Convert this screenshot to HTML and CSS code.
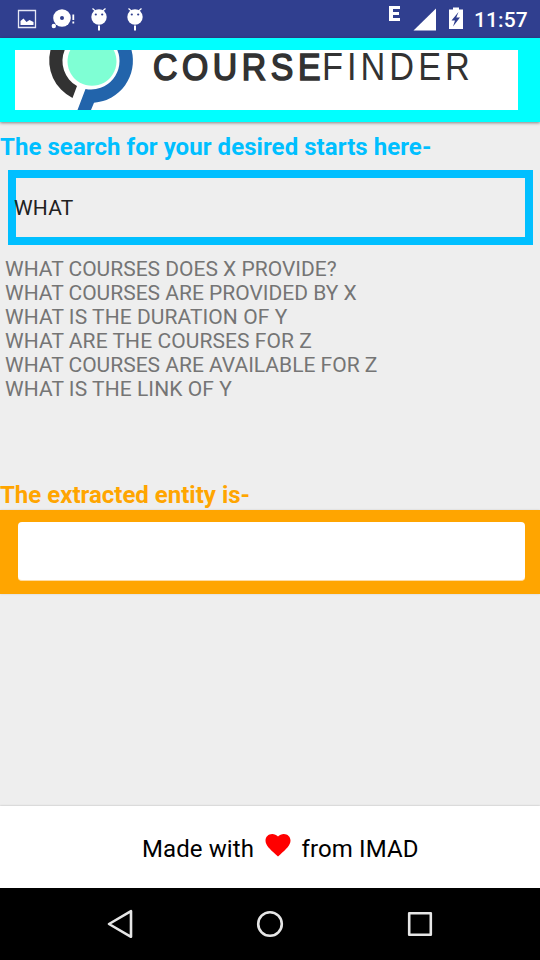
FILE: index.html
```html
<!DOCTYPE html>
<html lang="en">
<head>
<meta charset="utf-8">
<title>CourseFinder</title>
<link rel="stylesheet" href="styles.css">
</head>
<body>
<header class="status">
  <svg class="status-left" width="160" height="38" viewBox="0 0 160 38">
    <path d="M18.500 10.500h17v17h-17z" fill="none" stroke="#e6e8f5" stroke-width="1.300"/>
    <path d="M20.500 25v-4l3-2.500 3 3.500 3-2 4 2v3z" fill="#fff"/>
    <circle cx="62" cy="18" r="8.800" fill="#fff"/><circle cx="62" cy="18" r="2" fill="#303f8f"/>
    <circle cx="53.800" cy="26" r="2.200" fill="#fff"/>
    <path d="M73.300 14.500v5.500M73.300 21.500v2" stroke="#fff" stroke-width="1.800"/>
    <g id="droid">
      <circle cx="99" cy="17" r="7.700" fill="#fff"/>
      <path d="M92.500 8.500l3.500 3M105.500 8.500l-3.500 3" stroke="#fff" stroke-width="1.300"/>
      <path d="M99 25.500v5" stroke="#fff" stroke-width="2"/>
      <circle cx="95.800" cy="14.500" r="1.100" fill="#303f8f"/><circle cx="102.200" cy="14.500" r="1.100" fill="#303f8f"/>
    </g>
    <use href="#droid" x="36"/>
  </svg>
  <svg class="status-right" width="90" height="38" viewBox="380 0 90 38">
    <path d="M389 6h11v3h-7v3h6v3h-6v3h7v3h-11z" fill="#fff"/>
    <path d="M413.500 30.500h22.500v-22z" fill="#fff"/>
    <path d="M449 9.500h4v-2h6v2h4v19.500h-14z" fill="#fff"/>
    <path d="M458.500 12l-7 8.500h3.500l-2 6 7-9h-3.700z" fill="#303f8f"/>
  </svg>
  <span class="clock">11:57</span>
</header>
<div class="toolbar">
  <svg class="logo" width="503" height="60" viewBox="15 50 503 60">
    <rect x="15" y="50" width="503" height="60" fill="#fff"/>
    <path d="M70.300 50A24.500 24.500 0 1 0 113.700 50z" fill="#7fffd4"/>
    <path d="M50.500 50A42 42 0 0 0 72.500 98L77 86A28.500 28.500 0 0 1 64.700 50z" fill="#323232"/>
    <path d="M131.500 50A42 42 0 0 1 94 102.700L91 110H77.500L85.500 89A28.500 28.500 0 0 0 117.300 50z" fill="#2264ab"/>
    <g transform="translate(153 79.500) scale(.9 1)"><text class="logo-bold" textLength="186" lengthAdjust="spacing">COURSE</text></g>
    <g transform="translate(322 80) scale(.88 1)"><text class="logo-light" textLength="168" lengthAdjust="spacing">FINDER</text></g>
  </svg>
</div>
<main class="content">
  <h1 class="search-title">The search for your desired starts here-</h1>
  <div class="search-box"><span class="query">WHAT</span></div>
  <ul class="suggestions">
    <li>WHAT COURSES DOES X PROVIDE?</li>
    <li>WHAT COURSES ARE PROVIDED BY X</li>
    <li class="spaced">WHAT IS THE DURATION OF Y</li>
    <li class="spaced">WHAT ARE THE COURSES FOR Z</li>
    <li>WHAT COURSES ARE AVAILABLE FOR Z</li>
    <li class="spaced">WHAT IS THE LINK OF Y</li>
  </ul>
  <h2 class="entity-title">The extracted entity is-</h2>
  <div class="entity-bar"><div class="entity-field"></div></div>
</main>
<footer class="credit">
  <span class="made">Made with</span>
  <svg class="heart" width="26" height="24" viewBox="0 0 26 24"><path d="M13 23.500L11 21.700C4.500 15.800.500 12.200.500 7.500.500 3.700 3.400.900 7.200.900c2.200 0 4.400 1 5.800 2.700C14.400 1.900 16.600.900 18.800.900c3.800 0 6.700 2.800 6.700 6.600 0 4.700-4 8.300-10.500 14.200z" fill="red"/></svg>
  <span>from IMAD</span>
</footer>
<nav class="nav">
  <svg width="540" height="72" viewBox="0 888 540 72" fill="none" stroke="#e6e6e6" stroke-width="2.600" stroke-linejoin="round">
    <path d="M109 924l22-12.800v25.600z"/>
    <circle cx="270" cy="924" r="11.800"/>
    <path d="M409.200 913.200h21.600v21.600h-21.600z"/>
  </svg>
</nav>
</body>
</html>
```

FILE: styles.css
```css
* { box-sizing: border-box; }
body {
  margin: 0;
  width: 540px;
  height: 960px;
  display: flex;
  flex-direction: column;
  overflow: hidden;
  background: #eee;
  font-family: Roboto, sans-serif;
}
svg { display: block; flex: none; }
.status {
  height: 38px;
  flex: none;
  display: flex;
  background: #303f8f;
  color: #fff;
}
.status-right { margin-left: 220px; }
.clock {
  margin-left: 4px;
  font-size: 21px;
  font-weight: 500;
  line-height: 40px;
  letter-spacing: .1px;
}
.toolbar {
  height: 84px;
  flex: none;
  padding: 12px 15px;
  background: #0ff;
  box-shadow: 0 1px 3px rgba(0, 0, 0, .45);
}
.logo { overflow: visible; }
.logo text { font-family: "Liberation Sans", sans-serif; font-size: 39px; fill: #323232; }
.logo .logo-bold { font-size: 37.5px; stroke: #323232; stroke-width: 1.7px; }
.content { flex: 1; }
h1, h2 { margin: 0; font-size: 24px; line-height: 28px; font-weight: 700; white-space: nowrap; }
.search-title { padding-top: 11px; height: 48px; color: #00bfff; letter-spacing: .06px; }
.search-box {
  width: 525px;
  height: 75px;
  margin-left: 8px;
  border: 8px solid #00bfff;
  line-height: 61px;
  font-size: 21px;
  color: #212121;
}
.query { margin-left: -2px; letter-spacing: .2px; }
.suggestions {
  list-style: none;
  margin: 12px 0 0;
  padding: 0 0 0 5px;
  height: 224px;
  font-size: 21px;
  line-height: 24px;
  color: #757575;
}
.spaced { letter-spacing: .07px; }
.entity-title { height: 29px; color: orange; }
.entity-bar {
  height: 84px;
  padding: 12px 15px 13px 18px;
  background: orange;
  box-shadow: 0 0 2px rgba(0, 0, 0, .12);
}
.entity-field {
  height: 59px;
  background: #fff;
  border-bottom: 1px solid #ffdca0;
  border-radius: 4px;
}
.credit {
  height: 82px;
  flex: none;
  display: flex;
  align-items: center;
  padding: 3px 0 0 142px;
  background: #fff;
  box-shadow: 0 0 2px rgba(0, 0, 0, .25);
  color: #000;
  font-size: 24px;
  letter-spacing: .1px;
}
.heart { margin: -7px 10.5px 0 11px; }
.nav { height: 72px; flex: none; background: #000; }
```
